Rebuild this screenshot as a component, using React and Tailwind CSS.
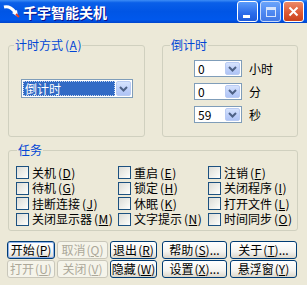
import React from 'react';

const cjk = "font-['Noto_Sans_CJK_SC','Noto_Sans',sans-serif]";

const Key = ({ k, tight }) => (
  <span className={tight ? 'ml-[1px]' : 'ml-[2px]'}>
    (<span className={`underline underline-offset-1 ${tight ? '' : 'px-[0.5px]'}`}>{k}</span>)
  </span>
);

const Chevron = () => (
  <svg width="9" height="6" viewBox="0 0 9 6">
    <path d="M1 1l3.5 3.5L8 1" stroke="#4D6185" strokeWidth="2" fill="none" />
  </svg>
);

const DropBtn = () => (
  <div className="w-[15px] h-full shrink-0 rounded-[2px] border border-[#B9CBF3] bg-[linear-gradient(180deg,#D6E3FD_0%,#BCCEF9_60%,#AFC4F5_100%)] flex items-center justify-center">
    <Chevron />
  </div>
);

const Check = ({ label, k }) => (
  <label className="flex items-center h-[15.5px]">
    <span className="w-[13px] h-[13px] shrink-0 border border-[#1C5180] bg-[linear-gradient(135deg,#DCDCD7_0%,#F4F4F0_70%,#FFFFFF_100%)]" />
    <span className="ml-[3px] text-[12px] leading-[14px] text-black whitespace-nowrap">
      {label}
      <Key k={k} />
    </span>
  </label>
);

const Btn = ({ children, className, disabled, focus }) => (
  <button
    className={`h-[18px] px-0 rounded-[3px] border text-[12px] leading-none flex items-center justify-center whitespace-nowrap overflow-visible ${
      disabled
        ? 'border-[#C9C7BA] bg-[#F5F4EA] text-[#ACA899]'
        : 'border-[#003C74] bg-[linear-gradient(180deg,#FFFFFF_0%,#F4F4F0_60%,#DCD7CB_100%)] text-black'
    } ${focus ? 'shadow-[inset_0_0_0_1px_#8EB2EB]' : ''} ${className}`}
  >
    {children}
  </button>
);

const tasks = [
  ['关机', 'D'], ['重启', 'E'], ['注销', 'F'],
  ['待机', 'G'], ['锁定', 'H'], ['关闭程序', 'I'],
  ['挂断连接', 'J'], ['休眠', 'K'], ['打开文件', 'L'],
  ['关闭显示器', 'M'], ['文字提示', 'N'], ['时间同步', 'O'],
];

export default function App() {
  return (
    <div className={`w-[307px] h-[285px] bg-[#ECE9D8] overflow-hidden ${cjk}`}>
      {/* Title bar */}
      <div className="h-[23px] flex items-center bg-[linear-gradient(180deg,#3D8DF6_0%,#0A5FE8_12%,#0055E5_50%,#0058EC_85%,#0044CC_100%)]">
        <svg width="18" height="14" viewBox="0 0 18 14" className="ml-[3px]">
          <path d="M1 2 C5 1 9 3 12 7" stroke="#FFFFFF" strokeWidth="3" fill="none" />
          <path d="M9 8 L15 12 L14 5 Z" fill="#FFFFFF" />
          <path d="M13 9 L16 12" stroke="#D83A2A" strokeWidth="2" />
        </svg>
        <span className="ml-[2px] text-[14px] font-bold text-white leading-none [text-shadow:1px_1px_#0F1089]">
          千宇智能关机
        </span>
        <div className="ml-auto mr-[3px] flex gap-[2px]">
          <div className="w-[21px] h-[21px] rounded-[3px] border border-white bg-[linear-gradient(180deg,#5A9BFA_0%,#2A6BEA_60%,#1F5BDA_100%)] relative">
            <span className="absolute left-[5px] top-[13px] w-[7px] h-[3px] bg-white" />
          </div>
          <div className="w-[21px] h-[21px] rounded-[3px] border border-[#C8DAFB] bg-[linear-gradient(180deg,#6AA4FA_0%,#4C86F0_60%,#4078E6_100%)] flex items-center justify-center">
            <span className="w-[10px] h-[10px] border border-[#D6E4FB] border-t-[3px]" />
          </div>
          <div className="w-[21px] h-[21px] rounded-[3px] border border-white bg-[linear-gradient(180deg,#EC8A68_0%,#DE5A35_55%,#C9421C_100%)] flex items-center justify-center">
            <svg width="11" height="11" viewBox="0 0 11 11">
              <path d="M1.5 1.5l8 8M9.5 1.5l-8 8" stroke="#FFFFFF" strokeWidth="2" />
            </svg>
          </div>
        </div>
      </div>

      <div className="px-[8px] pt-[15px]">
        {/* Top groups */}
        <div className="flex gap-[17px]">
          <fieldset className="w-[137px] h-[99px] border border-[#D0D0BF] rounded-[3px]">
            <legend className="ml-[5px] px-[1px] text-[12px] leading-[14px] text-[#0046D5]">
              计时方式<Key k="A" />
            </legend>
            <div className="mt-[27px] ml-[12px] w-[112px] h-[19px] border border-[#7F9DB9] bg-white p-[1px] flex">
              <div className="flex-1 mr-[1px] bg-[#316AC5] border border-dotted border-[#C9D8F0] flex items-center">
                <span className="ml-[1px] text-[12px] leading-none text-white">倒计时</span>
              </div>
              <DropBtn />
            </div>
          </fieldset>

          <fieldset className="w-[136px] h-[99px] border border-[#D0D0BF] rounded-[3px]">
            <legend className="ml-[7px] px-[1px] text-[12px] leading-[14px] text-[#0046D5]">
              倒计时
            </legend>
            <div className="pt-[8px] pl-[31px] flex flex-col gap-[6px]">
              {[['0', '小时'], ['0', '分'], ['59', '秒']].map(([v, u]) => (
                <div key={u} className="flex items-center">
                  <div className="w-[48px] h-[17px] border border-[#7F9DB9] bg-white p-[1px] flex">
                    <span className="flex-1 pl-[2px] text-[12px] leading-[13px] text-black">{v}</span>
                    <DropBtn />
                  </div>
                  <span className="ml-[7px] text-[12px] leading-none text-black">{u}</span>
                </div>
              ))}
            </div>
          </fieldset>
        </div>

        {/* Task group */}
        <fieldset className="mt-[6px] w-[290px] h-[88px] border border-[#D0D0BF] rounded-[3px]">
          <legend className="ml-[8px] px-[1px] text-[12px] leading-[14px] text-[#0046D5]">任务</legend>
          <div className="pt-[8px] pl-[7px] grid grid-cols-[102px_90px_1fr]">
            {tasks.map(([l, k]) => (
              <Check key={k} label={l} k={k} />
            ))}
          </div>
        </fieldset>

        {/* Buttons */}
        <div className="mt-[10px] -ml-[1px] flex flex-col gap-[1px]">
          <div className="flex">
            <Btn className="w-[48px]" focus>开始<Key tight k="P" /></Btn>
            <Btn className="w-[51px] ml-[2px]" disabled>取消<Key tight k="Q" /></Btn>
            <Btn className="w-[47px] ml-[2px]">退出<Key tight k="R" /></Btn>
            <Btn className="w-[65px] ml-[5px]">帮助<Key tight k="S" />...</Btn>
            <Btn className="w-[67px] ml-[3px]">关于<Key tight k="T" />...</Btn>
          </div>
          <div className="flex">
            <Btn className="w-[48px]" disabled>打开<Key tight k="U" /></Btn>
            <Btn className="w-[51px] ml-[2px]" disabled>关闭<Key tight k="V" /></Btn>
            <Btn className="w-[47px] ml-[2px]">隐藏<Key tight k="W" /></Btn>
            <Btn className="w-[65px] ml-[5px]">设置<Key tight k="X" />...</Btn>
            <Btn className="w-[67px] ml-[3px]">悬浮窗<Key tight k="Y" /></Btn>
          </div>
        </div>
      </div>
    </div>
  );
}
